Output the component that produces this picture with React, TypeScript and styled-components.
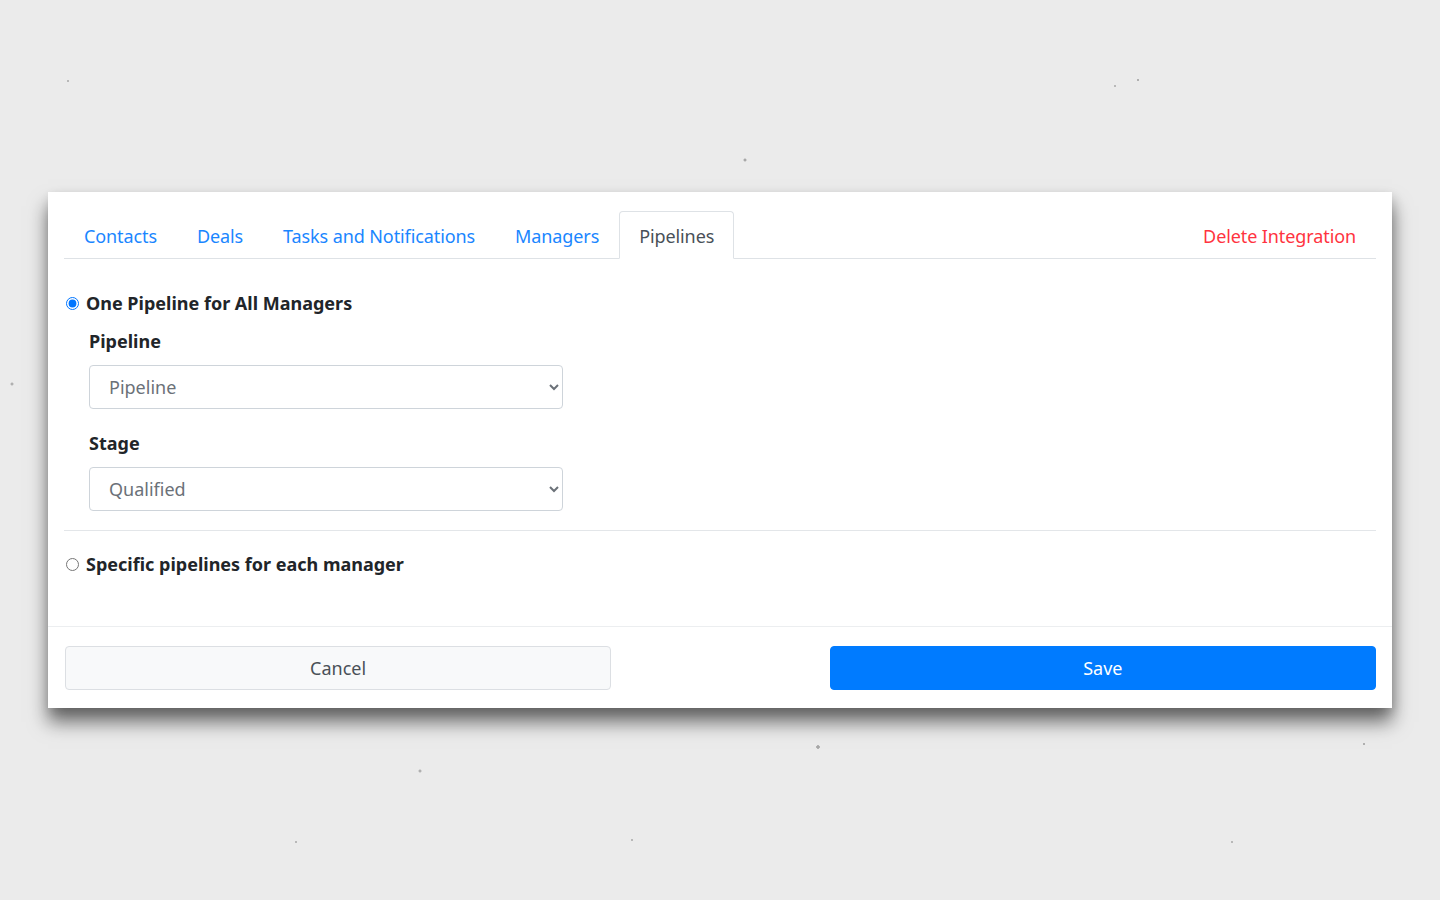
import React, { useState } from 'react';
import styled, { createGlobalStyle } from 'styled-components';

const GlobalStyle = createGlobalStyle`
  html, body {
    margin: 0;
    padding: 0;
  }
  body {
    background-color: #ebebeb;
    font-family: "Noto Sans", "Open Sans", Arial, sans-serif;
    color: #212529;
  }
  * {
    box-sizing: border-box;
  }
`;

const Page = styled.div`
  min-height: 100vh;
  padding: 192px 48px 0;
  background-image:
    radial-gradient(circle at 68px 81px, #b8b8b8 0 1px, transparent 1.5px),
    radial-gradient(circle at 745px 160px, #a8a8a8 0 1.2px, transparent 1.8px),
    radial-gradient(circle at 1138px 80px, #b0b0b0 0 1px, transparent 1.5px),
    radial-gradient(circle at 1115px 86px, #b8b8b8 0 1px, transparent 1.5px),
    radial-gradient(circle at 12px 384px, #b0b0b0 0 1.2px, transparent 1.8px),
    radial-gradient(circle at 818px 747px, #a8a8a8 0 1.5px, transparent 2px),
    radial-gradient(circle at 420px 771px, #b0b0b0 0 1.2px, transparent 1.8px),
    radial-gradient(circle at 1364px 744px, #b0b0b0 0 1px, transparent 1.5px),
    radial-gradient(circle at 296px 842px, #b8b8b8 0 1px, transparent 1.5px),
    radial-gradient(circle at 1232px 842px, #b8b8b8 0 1px, transparent 1.5px),
    radial-gradient(circle at 632px 840px, #b8b8b8 0 1px, transparent 1.5px);
`;

const Card = styled.div`
  background: #ffffff;
  width: 100%;
  box-shadow: 0 14px 18px rgba(0, 0, 0, 0.55), 2px 4px 10px rgba(0, 0, 0, 0.12);
`;

const TabNav = styled.nav`
  display: flex;
  align-items: flex-end;
  margin: 0 16px;
  padding-top: 19px;
  border-bottom: 1px solid #dee2e6;
`;

const Tab = styled.a<{ $active?: boolean; $danger?: boolean }>`
  display: flex;
  align-items: center;
  height: 48px;
  padding: 1px 19px 0 19px;
  margin-bottom: -1px;
  font-size: 18px;
  letter-spacing: -0.1px;
  text-decoration: none;
  cursor: pointer;
  color: ${p => (p.$danger ? '#ff3340' : p.$active ? '#495057' : '#1a86ff')};
  background: ${p => (p.$active ? '#fff' : 'transparent')};
  border: 1px solid ${p => (p.$active ? '#dee2e6' : 'transparent')};
  border-bottom-color: ${p => (p.$active ? '#fff' : 'transparent')};
  border-radius: 4px 4px 0 0;
  margin-left: ${p => (p.$danger ? 'auto' : '0')};
`;

const Body = styled.div`
  padding: 31px 16px 0;
`;

const RadioRow = styled.label`
  display: flex;
  align-items: center;
  gap: 7px;
  font-size: 18px;
  font-weight: 700;
  line-height: 27px;
  color: #212529;
  cursor: pointer;

  input {
    margin: 0 0 0 2px;
    width: 13px;
    height: 13px;
    accent-color: #0075ff;
  }
`;

const Group = styled.div`
  padding-left: 25px;
  margin-top: 11px;
  display: flex;
  flex-direction: column;
`;

const FieldLabel = styled.div<{ $first?: boolean }>`
  font-size: 18px;
  font-weight: 700;
  line-height: 27px;
  margin-top: ${p => (p.$first ? '0' : '21px')};
  margin-bottom: 10px;
`;

const Select = styled.select`
  width: 474px;
  height: 44px;
  padding: 0 10px 0 15px;
  font-family: inherit;
  font-size: 18px;
  color: #6b7178;
  background: #fff;
  border: 1px solid #ced4da;
  border-radius: 4px;
  outline: none;
`;

const Divider = styled.hr`
  border: 0;
  border-top: 1px solid #e3e6e9;
  margin: 19px 0 20px;
`;

const Footer = styled.div`
  margin-top: 48px;
  border-top: 1px solid #eceef0;
  padding: 19px 16px 18px 17px;
  display: flex;
  justify-content: space-between;
`;

const Button = styled.button<{ $primary?: boolean }>`
  width: calc((100% * 5) / 12);
  height: 44px;
  font-family: inherit;
  font-size: 18px;
  border-radius: 4px;
  cursor: pointer;
  color: ${p => (p.$primary ? '#ffffff' : '#495057')};
  background: ${p => (p.$primary ? '#007bff' : '#f8f9fa')};
  border: 1px solid ${p => (p.$primary ? '#007bff' : '#dcdfe3')};
`;

const tabs = ['Contacts', 'Deals', 'Tasks and Notifications', 'Managers', 'Pipelines'];

export default function App() {
  const [mode, setMode] = useState<'one' | 'each'>('one');

  return (
    <>
      <GlobalStyle />
      <Page>
        <Card>
          <TabNav>
            {tabs.map(t => (
              <Tab key={t} $active={t === 'Pipelines'}>
                {t}
              </Tab>
            ))}
            <Tab $danger>Delete Integration</Tab>
          </TabNav>

          <Body>
            <RadioRow>
              <input type="radio" name="mode" checked={mode === 'one'} onChange={() => setMode('one')} />
              One Pipeline for All Managers
            </RadioRow>
            <Group>
              <FieldLabel $first>Pipeline</FieldLabel>
              <Select defaultValue="">
                <option value="">Pipeline</option>
              </Select>
              <FieldLabel>Stage</FieldLabel>
              <Select defaultValue="qualified">
                <option value="qualified">Qualified</option>
              </Select>
            </Group>
            <Divider />
            <RadioRow>
              <input type="radio" name="mode" checked={mode === 'each'} onChange={() => setMode('each')} />
              Specific pipelines for each manager
            </RadioRow>
          </Body>

          <Footer>
            <Button>Cancel</Button>
            <Button $primary>Save</Button>
          </Footer>
        </Card>
      </Page>
    </>
  );
}
